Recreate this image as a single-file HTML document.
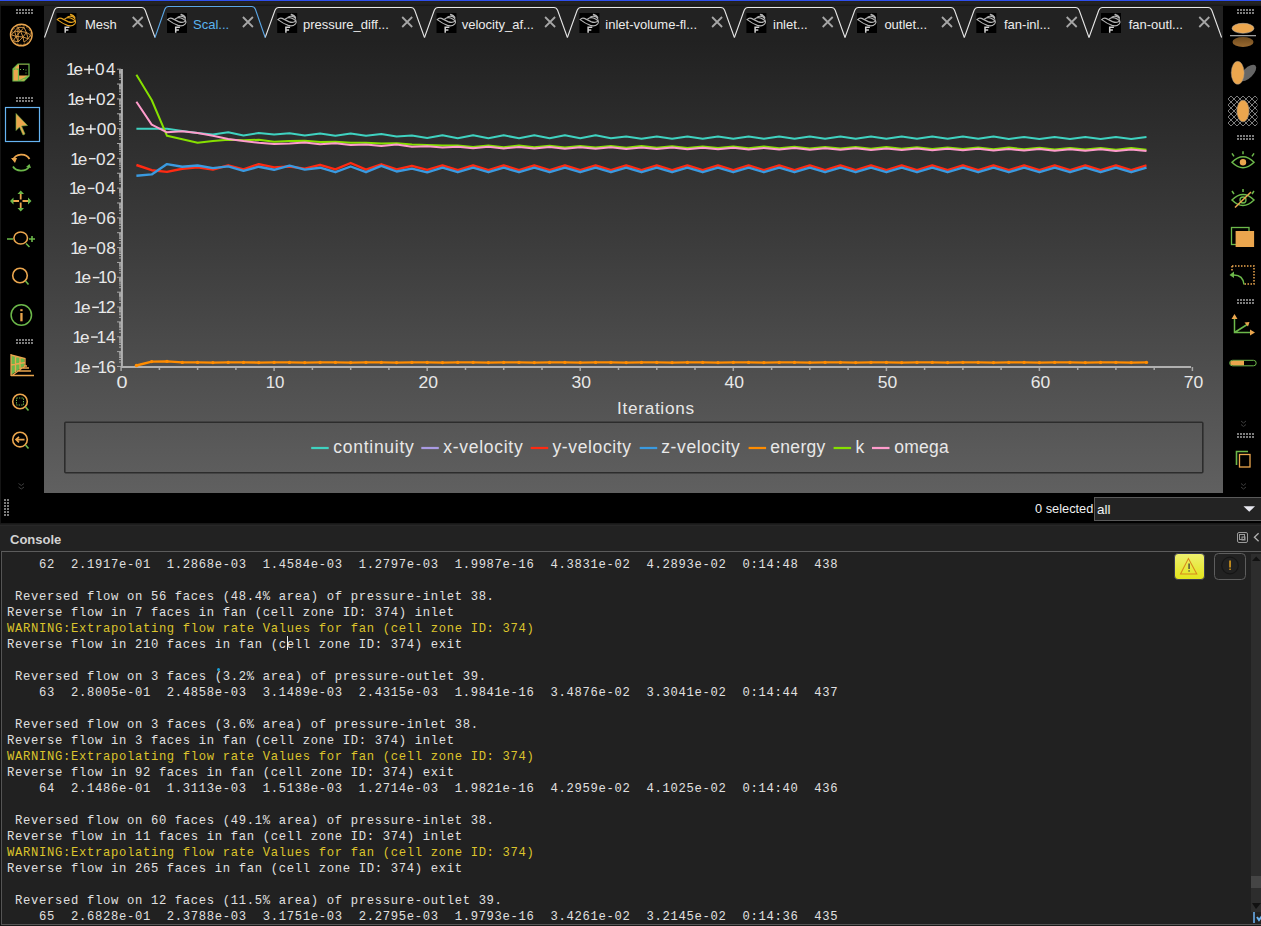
<!DOCTYPE html>
<html><head><meta charset="utf-8">
<style>
*{margin:0;padding:0;box-sizing:border-box}
html,body{width:1261px;height:926px;overflow:hidden;background:#1a1a1a;font-family:"Liberation Sans",sans-serif}
.abs{position:absolute}
#topline{left:0;top:0;width:1261px;height:1px;background:#2f50ee}
#topband{left:0;top:1px;width:1261px;height:5px;background:linear-gradient(#1f1d16 0,#242424 20%,#222 50%,#161616 100%)}
#ltb{left:1px;top:6px;width:43px;height:517px;background:#000}
#lcol{left:0;top:6px;width:1px;height:920px;background:#141414}
#rtb{left:1223px;top:6px;width:38px;height:487px;background:#000}
#tabbar{left:44px;top:6px;width:1179px;height:34px;background:#222}
#status{left:44px;top:493px;width:1217px;height:30px;background:#000}
#sel{left:1035px;top:501px;font-size:12.8px;color:#f0f0f0}
#dd{left:1094px;top:497px;width:167px;height:24px;background:#232323;border:1px solid #5a5a5a;border-right:none}
#ddtxt{left:1097px;top:501.5px;font-size:13.5px;color:#f2f2f2}
#contitle{left:0;top:523px;width:1261px;height:28px;background:#222;border-top:1px solid #181818;box-shadow:inset 0 1px 0 #1e1e1e, inset 0 2px 0 #282828}
#contitle .t{position:absolute;left:10px;top:530px;font-weight:bold;font-size:13px;color:#cfcfcf}
#conbox{left:1px;top:551px;width:1260px;height:374px;border-top:1px solid #5c5c5c;border-left:1px solid #555;border-bottom:1px solid #555;background:#212121}
#con{left:7px;top:557px;font-family:"Liberation Mono",monospace;font-size:12.2px;letter-spacing:0.68px;line-height:16px;color:#e0e0e0;white-space:pre}
#con .w{color:#dcc42c}
#scroll{left:1251px;top:554px;width:10px;height:358px;background:#2d2d2d}
</style></head><body>
<div class="abs" id="topline"></div>
<div class="abs" id="topband"></div>
<div class="abs" id="lcol"></div>
<div class="abs" id="ltb"></div>
<div class="abs" id="rtb"></div>
<div class="abs" id="tabbar"></div>
<svg width="1179" height="453" viewBox="44 40 1179 453" style="position:absolute;left:44px;top:40px">
<defs><linearGradient id="bg" x1="0" y1="0" x2="0" y2="1"><stop offset="0" stop-color="#212121"/><stop offset="0.45" stop-color="#3c3c3c"/><stop offset="1" stop-color="#606060"/></linearGradient></defs>
<rect x="44" y="40" width="1179" height="453" fill="url(#bg)"/>
<g stroke="#a8a8a8" stroke-width="1"><line x1="117.0" y1="366.50" x2="121" y2="366.50"/><line x1="119" y1="362.03" x2="121" y2="362.03"/><line x1="119" y1="359.41" x2="121" y2="359.41"/><line x1="119" y1="357.55" x2="121" y2="357.55"/><line x1="119" y1="356.11" x2="121" y2="356.11"/><line x1="119" y1="354.93" x2="121" y2="354.93"/><line x1="119" y1="353.94" x2="121" y2="353.94"/><line x1="119" y1="353.08" x2="121" y2="353.08"/><line x1="119" y1="352.32" x2="121" y2="352.32"/><line x1="117.0" y1="351.63" x2="121" y2="351.63"/><line x1="119" y1="347.16" x2="121" y2="347.16"/><line x1="119" y1="344.54" x2="121" y2="344.54"/><line x1="119" y1="342.69" x2="121" y2="342.69"/><line x1="119" y1="341.24" x2="121" y2="341.24"/><line x1="119" y1="340.07" x2="121" y2="340.07"/><line x1="119" y1="339.07" x2="121" y2="339.07"/><line x1="119" y1="338.21" x2="121" y2="338.21"/><line x1="119" y1="337.45" x2="121" y2="337.45"/><line x1="117.0" y1="336.77" x2="121" y2="336.77"/><line x1="119" y1="332.30" x2="121" y2="332.30"/><line x1="119" y1="329.68" x2="121" y2="329.68"/><line x1="119" y1="327.82" x2="121" y2="327.82"/><line x1="119" y1="326.38" x2="121" y2="326.38"/><line x1="119" y1="325.20" x2="121" y2="325.20"/><line x1="119" y1="324.21" x2="121" y2="324.21"/><line x1="119" y1="323.35" x2="121" y2="323.35"/><line x1="119" y1="322.59" x2="121" y2="322.59"/><line x1="117.0" y1="321.91" x2="121" y2="321.91"/><line x1="119" y1="317.43" x2="121" y2="317.43"/><line x1="119" y1="314.81" x2="121" y2="314.81"/><line x1="119" y1="312.96" x2="121" y2="312.96"/><line x1="119" y1="311.51" x2="121" y2="311.51"/><line x1="119" y1="310.34" x2="121" y2="310.34"/><line x1="119" y1="309.34" x2="121" y2="309.34"/><line x1="119" y1="308.48" x2="121" y2="308.48"/><line x1="119" y1="307.72" x2="121" y2="307.72"/><line x1="117.0" y1="307.04" x2="121" y2="307.04"/><line x1="119" y1="302.57" x2="121" y2="302.57"/><line x1="119" y1="299.95" x2="121" y2="299.95"/><line x1="119" y1="298.09" x2="121" y2="298.09"/><line x1="119" y1="296.65" x2="121" y2="296.65"/><line x1="119" y1="295.47" x2="121" y2="295.47"/><line x1="119" y1="294.48" x2="121" y2="294.48"/><line x1="119" y1="293.62" x2="121" y2="293.62"/><line x1="119" y1="292.86" x2="121" y2="292.86"/><line x1="117.0" y1="292.18" x2="121" y2="292.18"/><line x1="119" y1="287.70" x2="121" y2="287.70"/><line x1="119" y1="285.08" x2="121" y2="285.08"/><line x1="119" y1="283.23" x2="121" y2="283.23"/><line x1="119" y1="281.78" x2="121" y2="281.78"/><line x1="119" y1="280.61" x2="121" y2="280.61"/><line x1="119" y1="279.61" x2="121" y2="279.61"/><line x1="119" y1="278.75" x2="121" y2="278.75"/><line x1="119" y1="277.99" x2="121" y2="277.99"/><line x1="117.0" y1="277.31" x2="121" y2="277.31"/><line x1="119" y1="272.84" x2="121" y2="272.84"/><line x1="119" y1="270.22" x2="121" y2="270.22"/><line x1="119" y1="268.36" x2="121" y2="268.36"/><line x1="119" y1="266.92" x2="121" y2="266.92"/><line x1="119" y1="265.74" x2="121" y2="265.74"/><line x1="119" y1="264.75" x2="121" y2="264.75"/><line x1="119" y1="263.89" x2="121" y2="263.89"/><line x1="119" y1="263.13" x2="121" y2="263.13"/><line x1="117.0" y1="262.44" x2="121" y2="262.44"/><line x1="119" y1="257.97" x2="121" y2="257.97"/><line x1="119" y1="255.35" x2="121" y2="255.35"/><line x1="119" y1="253.50" x2="121" y2="253.50"/><line x1="119" y1="252.05" x2="121" y2="252.05"/><line x1="119" y1="250.88" x2="121" y2="250.88"/><line x1="119" y1="249.88" x2="121" y2="249.88"/><line x1="119" y1="249.02" x2="121" y2="249.02"/><line x1="119" y1="248.26" x2="121" y2="248.26"/><line x1="117.0" y1="247.58" x2="121" y2="247.58"/><line x1="119" y1="243.11" x2="121" y2="243.11"/><line x1="119" y1="240.49" x2="121" y2="240.49"/><line x1="119" y1="238.63" x2="121" y2="238.63"/><line x1="119" y1="237.19" x2="121" y2="237.19"/><line x1="119" y1="236.01" x2="121" y2="236.01"/><line x1="119" y1="235.02" x2="121" y2="235.02"/><line x1="119" y1="234.16" x2="121" y2="234.16"/><line x1="119" y1="233.40" x2="121" y2="233.40"/><line x1="117.0" y1="232.72" x2="121" y2="232.72"/><line x1="119" y1="228.24" x2="121" y2="228.24"/><line x1="119" y1="225.62" x2="121" y2="225.62"/><line x1="119" y1="223.77" x2="121" y2="223.77"/><line x1="119" y1="222.32" x2="121" y2="222.32"/><line x1="119" y1="221.15" x2="121" y2="221.15"/><line x1="119" y1="220.15" x2="121" y2="220.15"/><line x1="119" y1="219.29" x2="121" y2="219.29"/><line x1="119" y1="218.53" x2="121" y2="218.53"/><line x1="117.0" y1="217.85" x2="121" y2="217.85"/><line x1="119" y1="213.38" x2="121" y2="213.38"/><line x1="119" y1="210.76" x2="121" y2="210.76"/><line x1="119" y1="208.90" x2="121" y2="208.90"/><line x1="119" y1="207.46" x2="121" y2="207.46"/><line x1="119" y1="206.28" x2="121" y2="206.28"/><line x1="119" y1="205.29" x2="121" y2="205.29"/><line x1="119" y1="204.43" x2="121" y2="204.43"/><line x1="119" y1="203.67" x2="121" y2="203.67"/><line x1="117.0" y1="202.99" x2="121" y2="202.99"/><line x1="119" y1="198.51" x2="121" y2="198.51"/><line x1="119" y1="195.89" x2="121" y2="195.89"/><line x1="119" y1="194.04" x2="121" y2="194.04"/><line x1="119" y1="192.59" x2="121" y2="192.59"/><line x1="119" y1="191.42" x2="121" y2="191.42"/><line x1="119" y1="190.42" x2="121" y2="190.42"/><line x1="119" y1="189.56" x2="121" y2="189.56"/><line x1="119" y1="188.80" x2="121" y2="188.80"/><line x1="117.0" y1="188.12" x2="121" y2="188.12"/><line x1="119" y1="183.65" x2="121" y2="183.65"/><line x1="119" y1="181.03" x2="121" y2="181.03"/><line x1="119" y1="179.17" x2="121" y2="179.17"/><line x1="119" y1="177.73" x2="121" y2="177.73"/><line x1="119" y1="176.55" x2="121" y2="176.55"/><line x1="119" y1="175.56" x2="121" y2="175.56"/><line x1="119" y1="174.70" x2="121" y2="174.70"/><line x1="119" y1="173.94" x2="121" y2="173.94"/><line x1="117.0" y1="173.25" x2="121" y2="173.25"/><line x1="119" y1="168.78" x2="121" y2="168.78"/><line x1="119" y1="166.16" x2="121" y2="166.16"/><line x1="119" y1="164.31" x2="121" y2="164.31"/><line x1="119" y1="162.86" x2="121" y2="162.86"/><line x1="119" y1="161.69" x2="121" y2="161.69"/><line x1="119" y1="160.69" x2="121" y2="160.69"/><line x1="119" y1="159.83" x2="121" y2="159.83"/><line x1="119" y1="159.07" x2="121" y2="159.07"/><line x1="117.0" y1="158.39" x2="121" y2="158.39"/><line x1="119" y1="153.92" x2="121" y2="153.92"/><line x1="119" y1="151.30" x2="121" y2="151.30"/><line x1="119" y1="149.44" x2="121" y2="149.44"/><line x1="119" y1="148.00" x2="121" y2="148.00"/><line x1="119" y1="146.82" x2="121" y2="146.82"/><line x1="119" y1="145.83" x2="121" y2="145.83"/><line x1="119" y1="144.97" x2="121" y2="144.97"/><line x1="119" y1="144.21" x2="121" y2="144.21"/><line x1="117.0" y1="143.53" x2="121" y2="143.53"/><line x1="119" y1="139.05" x2="121" y2="139.05"/><line x1="119" y1="136.43" x2="121" y2="136.43"/><line x1="119" y1="134.58" x2="121" y2="134.58"/><line x1="119" y1="133.13" x2="121" y2="133.13"/><line x1="119" y1="131.96" x2="121" y2="131.96"/><line x1="119" y1="130.96" x2="121" y2="130.96"/><line x1="119" y1="130.10" x2="121" y2="130.10"/><line x1="119" y1="129.34" x2="121" y2="129.34"/><line x1="117.0" y1="128.66" x2="121" y2="128.66"/><line x1="119" y1="124.19" x2="121" y2="124.19"/><line x1="119" y1="121.57" x2="121" y2="121.57"/><line x1="119" y1="119.71" x2="121" y2="119.71"/><line x1="119" y1="118.27" x2="121" y2="118.27"/><line x1="119" y1="117.09" x2="121" y2="117.09"/><line x1="119" y1="116.10" x2="121" y2="116.10"/><line x1="119" y1="115.24" x2="121" y2="115.24"/><line x1="119" y1="114.48" x2="121" y2="114.48"/><line x1="117.0" y1="113.80" x2="121" y2="113.80"/><line x1="119" y1="109.32" x2="121" y2="109.32"/><line x1="119" y1="106.70" x2="121" y2="106.70"/><line x1="119" y1="104.85" x2="121" y2="104.85"/><line x1="119" y1="103.40" x2="121" y2="103.40"/><line x1="119" y1="102.23" x2="121" y2="102.23"/><line x1="119" y1="101.23" x2="121" y2="101.23"/><line x1="119" y1="100.37" x2="121" y2="100.37"/><line x1="119" y1="99.61" x2="121" y2="99.61"/><line x1="117.0" y1="98.93" x2="121" y2="98.93"/><line x1="119" y1="94.46" x2="121" y2="94.46"/><line x1="119" y1="91.84" x2="121" y2="91.84"/><line x1="119" y1="89.98" x2="121" y2="89.98"/><line x1="119" y1="88.54" x2="121" y2="88.54"/><line x1="119" y1="87.36" x2="121" y2="87.36"/><line x1="119" y1="86.37" x2="121" y2="86.37"/><line x1="119" y1="85.51" x2="121" y2="85.51"/><line x1="119" y1="84.75" x2="121" y2="84.75"/><line x1="117.0" y1="84.06" x2="121" y2="84.06"/><line x1="119" y1="79.59" x2="121" y2="79.59"/><line x1="119" y1="76.97" x2="121" y2="76.97"/><line x1="119" y1="75.12" x2="121" y2="75.12"/><line x1="119" y1="73.67" x2="121" y2="73.67"/><line x1="119" y1="72.50" x2="121" y2="72.50"/><line x1="119" y1="71.50" x2="121" y2="71.50"/><line x1="119" y1="70.64" x2="121" y2="70.64"/><line x1="119" y1="69.88" x2="121" y2="69.88"/><line x1="117.0" y1="69.20" x2="121" y2="69.20"/></g>
<g stroke="#a8a8a8" stroke-width="1.5"><line x1="121.1" y1="367" x2="121.1" y2="371"/><line x1="159.4" y1="367" x2="159.4" y2="370"/><line x1="197.6" y1="367" x2="197.6" y2="370"/><line x1="235.9" y1="367" x2="235.9" y2="370"/><line x1="274.1" y1="367" x2="274.1" y2="371"/><line x1="312.4" y1="367" x2="312.4" y2="370"/><line x1="350.7" y1="367" x2="350.7" y2="370"/><line x1="388.9" y1="367" x2="388.9" y2="370"/><line x1="427.2" y1="367" x2="427.2" y2="371"/><line x1="465.5" y1="367" x2="465.5" y2="370"/><line x1="503.7" y1="367" x2="503.7" y2="370"/><line x1="542.0" y1="367" x2="542.0" y2="370"/><line x1="580.2" y1="367" x2="580.2" y2="371"/><line x1="618.5" y1="367" x2="618.5" y2="370"/><line x1="656.8" y1="367" x2="656.8" y2="370"/><line x1="695.0" y1="367" x2="695.0" y2="370"/><line x1="733.3" y1="367" x2="733.3" y2="371"/><line x1="771.6" y1="367" x2="771.6" y2="370"/><line x1="809.8" y1="367" x2="809.8" y2="370"/><line x1="848.1" y1="367" x2="848.1" y2="370"/><line x1="886.4" y1="367" x2="886.4" y2="371"/><line x1="924.6" y1="367" x2="924.6" y2="370"/><line x1="962.9" y1="367" x2="962.9" y2="370"/><line x1="1001.1" y1="367" x2="1001.1" y2="370"/><line x1="1039.4" y1="367" x2="1039.4" y2="371"/><line x1="1077.7" y1="367" x2="1077.7" y2="370"/><line x1="1115.9" y1="367" x2="1115.9" y2="370"/><line x1="1154.2" y1="367" x2="1154.2" y2="370"/><line x1="1192.4" y1="367" x2="1192.4" y2="371"/></g>
<line x1="121.9" y1="69" x2="121.9" y2="368" stroke="#b0b0b0" stroke-width="2"/>
<line x1="121" y1="367" x2="1191" y2="367" stroke="#b0b0b0" stroke-width="2"/>
<g stroke="#e8e8e8" stroke-width="1.45" fill="none"><path d="M84.1,69.50 H94.1 M89.10,64.9 V74.1"/><path d="M85.2,99.23 H95.2 M90.20,94.6 V103.8"/><path d="M85.8,128.96 H95.8 M90.80,124.4 V133.6"/><path d="M88.9,158.69 H95.6"/><path d="M87.8,188.42 H94.5"/><path d="M89.0,218.15 H95.7"/><path d="M89.0,247.88 H95.7"/><path d="M92.8,277.61 H99.5"/><path d="M92.2,307.34 H98.9"/><path d="M91.1,337.07 H97.8"/><path d="M92.3,366.80 H99.0"/></g>
<g fill="#e8e8e8" font-family="Liberation Sans, sans-serif" font-size="17.2"><text x="66.1 73.6 95.0 106.0" y="75.3">1e04</text><text x="67.2 74.7 96.1 106.1" y="105.0">1e02</text><text x="67.8 75.3 96.7 106.7" y="134.8">1e00</text><text x="70.2 77.7 96.1 106.1" y="164.5">1e02</text><text x="69.1 76.6 95.0 106.0" y="194.2">1e04</text><text x="70.3 77.8 96.2 106.2" y="224.0">1e06</text><text x="70.3 77.8 96.2 106.2" y="253.7">1e08</text><text x="74.1 81.6 98.1 106.7" y="283.4">1e10</text><text x="73.5 81.0 97.5 106.1" y="313.1">1e12</text><text x="72.4 79.9 96.4 106.0" y="342.9">1e14</text><text x="73.6 81.1 97.6 106.2" y="372.6">1e16</text><text x="122.1" y="388" text-anchor="middle" textLength="11.0" lengthAdjust="spacingAndGlyphs">0</text><text x="275.1" y="388" text-anchor="middle" textLength="18.8" lengthAdjust="spacingAndGlyphs">10</text><text x="428.2" y="388" text-anchor="middle" textLength="19.5" lengthAdjust="spacingAndGlyphs">20</text><text x="581.2" y="388" text-anchor="middle" textLength="19.5" lengthAdjust="spacingAndGlyphs">30</text><text x="734.3" y="388" text-anchor="middle" textLength="19.5" lengthAdjust="spacingAndGlyphs">40</text><text x="887.4" y="388" text-anchor="middle" textLength="19.5" lengthAdjust="spacingAndGlyphs">50</text><text x="1040.4" y="388" text-anchor="middle" textLength="19.5" lengthAdjust="spacingAndGlyphs">60</text><text x="1193.4" y="388" text-anchor="middle" textLength="19.5" lengthAdjust="spacingAndGlyphs">70</text><text x="617" y="414" textLength="77" lengthAdjust="spacing">Iterations</text></g>
<polyline fill="none" stroke="#ff8c00" stroke-width="2.4" stroke-linejoin="round" points="136.4,365.5 151.7,361.6 167.0,361.4 182.3,362.4 197.6,362.4 212.9,362.6 228.2,362.4 243.5,362.4 258.8,362.6 274.1,362.4 289.5,362.4 304.8,362.6 320.1,362.4 335.4,362.4 350.7,362.6 366.0,362.4 381.3,362.4 396.6,362.6 411.9,362.4 427.2,362.4 442.5,362.6 457.8,362.4 473.1,362.4 488.4,362.6 503.7,362.4 519.0,362.4 534.3,362.6 549.6,362.4 564.9,362.4 580.2,362.6 595.6,362.4 610.9,362.4 626.2,362.6 641.5,362.4 656.8,362.4 672.1,362.6 687.4,362.4 702.7,362.4 718.0,362.6 733.3,362.4 748.6,362.4 763.9,362.6 779.2,362.4 794.5,362.4 809.8,362.6 825.1,362.4 840.4,362.4 855.7,362.6 871.0,362.4 886.4,362.4 901.7,362.6 917.0,362.4 932.3,362.4 947.6,362.6 962.9,362.4 978.2,362.4 993.5,362.6 1008.8,362.4 1024.1,362.4 1039.4,362.6 1054.7,362.4 1070.0,362.4 1085.3,362.6 1100.6,362.4 1115.9,362.4 1131.2,362.6 1146.5,362.4"/>
<g fill="#ff8c00"><circle cx="136.4" cy="365.5" r="1.7"/><circle cx="151.7" cy="361.6" r="1.7"/><circle cx="167.0" cy="361.4" r="1.7"/><circle cx="182.3" cy="362.4" r="1.7"/><circle cx="197.6" cy="362.4" r="1.7"/><circle cx="212.9" cy="362.6" r="1.7"/><circle cx="228.2" cy="362.4" r="1.7"/><circle cx="243.5" cy="362.4" r="1.7"/><circle cx="258.8" cy="362.6" r="1.7"/><circle cx="274.1" cy="362.4" r="1.7"/><circle cx="289.5" cy="362.4" r="1.7"/><circle cx="304.8" cy="362.6" r="1.7"/><circle cx="320.1" cy="362.4" r="1.7"/><circle cx="335.4" cy="362.4" r="1.7"/><circle cx="350.7" cy="362.6" r="1.7"/><circle cx="366.0" cy="362.4" r="1.7"/><circle cx="381.3" cy="362.4" r="1.7"/><circle cx="396.6" cy="362.6" r="1.7"/><circle cx="411.9" cy="362.4" r="1.7"/><circle cx="427.2" cy="362.4" r="1.7"/><circle cx="442.5" cy="362.6" r="1.7"/><circle cx="457.8" cy="362.4" r="1.7"/><circle cx="473.1" cy="362.4" r="1.7"/><circle cx="488.4" cy="362.6" r="1.7"/><circle cx="503.7" cy="362.4" r="1.7"/><circle cx="519.0" cy="362.4" r="1.7"/><circle cx="534.3" cy="362.6" r="1.7"/><circle cx="549.6" cy="362.4" r="1.7"/><circle cx="564.9" cy="362.4" r="1.7"/><circle cx="580.2" cy="362.6" r="1.7"/><circle cx="595.6" cy="362.4" r="1.7"/><circle cx="610.9" cy="362.4" r="1.7"/><circle cx="626.2" cy="362.6" r="1.7"/><circle cx="641.5" cy="362.4" r="1.7"/><circle cx="656.8" cy="362.4" r="1.7"/><circle cx="672.1" cy="362.6" r="1.7"/><circle cx="687.4" cy="362.4" r="1.7"/><circle cx="702.7" cy="362.4" r="1.7"/><circle cx="718.0" cy="362.6" r="1.7"/><circle cx="733.3" cy="362.4" r="1.7"/><circle cx="748.6" cy="362.4" r="1.7"/><circle cx="763.9" cy="362.6" r="1.7"/><circle cx="779.2" cy="362.4" r="1.7"/><circle cx="794.5" cy="362.4" r="1.7"/><circle cx="809.8" cy="362.6" r="1.7"/><circle cx="825.1" cy="362.4" r="1.7"/><circle cx="840.4" cy="362.4" r="1.7"/><circle cx="855.7" cy="362.6" r="1.7"/><circle cx="871.0" cy="362.4" r="1.7"/><circle cx="886.4" cy="362.4" r="1.7"/><circle cx="901.7" cy="362.6" r="1.7"/><circle cx="917.0" cy="362.4" r="1.7"/><circle cx="932.3" cy="362.4" r="1.7"/><circle cx="947.6" cy="362.6" r="1.7"/><circle cx="962.9" cy="362.4" r="1.7"/><circle cx="978.2" cy="362.4" r="1.7"/><circle cx="993.5" cy="362.6" r="1.7"/><circle cx="1008.8" cy="362.4" r="1.7"/><circle cx="1024.1" cy="362.4" r="1.7"/><circle cx="1039.4" cy="362.6" r="1.7"/><circle cx="1054.7" cy="362.4" r="1.7"/><circle cx="1070.0" cy="362.4" r="1.7"/><circle cx="1085.3" cy="362.6" r="1.7"/><circle cx="1100.6" cy="362.4" r="1.7"/><circle cx="1115.9" cy="362.4" r="1.7"/><circle cx="1131.2" cy="362.6" r="1.7"/><circle cx="1146.5" cy="362.4" r="1.7"/></g>
<polyline fill="none" stroke="#3fd2c0" stroke-width="2" stroke-linejoin="round" points="136.4,128.8 151.7,128.8 167.0,128.8 182.3,130.9 197.6,133.0 212.9,134.4 228.2,132.3 243.5,135.5 258.8,133.0 274.1,134.4 289.5,133.2 304.8,135.4 320.1,133.5 335.4,135.8 350.7,133.5 366.0,135.8 381.3,134.1 396.6,136.4 411.9,135.4 427.2,137.9 442.5,135.3 457.8,138.3 473.1,135.3 488.4,138.3 503.7,135.3 519.0,138.3 534.3,135.3 549.6,138.3 564.9,135.3 580.2,138.3 595.6,135.3 610.9,138.3 626.2,136.5 641.5,138.8 656.8,136.5 672.1,138.8 687.4,136.5 702.7,138.8 718.0,136.5 733.3,138.8 748.6,136.5 763.9,138.8 779.2,136.5 794.5,138.8 809.8,136.5 825.1,138.8 840.4,136.4 855.7,138.8 871.0,136.4 886.4,138.8 901.7,136.4 917.0,138.8 932.3,136.4 947.6,138.8 962.9,136.4 978.2,138.8 993.5,136.4 1008.8,138.9 1024.1,137.0 1039.4,138.9 1054.7,137.0 1070.0,138.9 1085.3,137.0 1100.6,138.9 1115.9,137.0 1131.2,138.9 1146.5,137.0"/>
<polyline fill="none" stroke="#86e000" stroke-width="2" stroke-linejoin="round" points="136.4,74.7 151.7,100.0 167.0,135.8 182.3,139.3 197.6,142.8 212.9,141.1 228.2,139.7 243.5,140.3 258.8,139.7 274.1,141.7 289.5,141.1 304.8,140.8 320.1,142.0 335.4,141.7 350.7,142.7 366.0,142.7 381.3,143.6 396.6,143.2 411.9,144.5 427.2,144.9 442.5,145.5 457.8,145.4 473.1,147.0 488.4,145.5 503.7,147.2 519.0,145.6 534.3,147.3 549.6,145.7 564.9,147.4 580.2,145.9 595.6,147.5 610.9,146.0 626.2,147.7 641.5,146.1 656.8,147.8 672.1,146.2 687.4,147.9 702.7,146.4 718.0,148.0 733.3,146.5 748.6,148.2 763.9,146.6 779.2,148.3 794.5,146.8 809.8,148.4 825.1,146.9 840.4,148.5 855.7,147.0 871.0,148.7 886.4,147.1 901.7,148.8 917.0,147.3 932.3,148.9 947.6,147.4 962.9,149.0 978.2,147.5 993.5,149.2 1008.8,147.6 1024.1,149.3 1039.4,147.8 1054.7,149.4 1070.0,147.9 1085.3,149.5 1100.6,148.0 1115.9,149.7 1131.2,148.1 1146.5,149.8"/>
<polyline fill="none" stroke="#ff9ccc" stroke-width="2" stroke-linejoin="round" points="136.4,101.7 151.7,124.6 167.0,132.3 182.3,131.3 197.6,133.0 212.9,135.8 228.2,138.9 243.5,141.1 258.8,142.8 274.1,143.9 289.5,143.6 304.8,142.4 320.1,144.3 335.4,143.2 350.7,144.9 366.0,144.5 381.3,145.9 396.6,144.5 411.9,146.8 427.2,146.2 442.5,147.4 457.8,146.7 473.1,148.3 488.4,146.8 503.7,148.5 519.0,146.9 534.3,148.6 549.6,147.0 564.9,148.7 580.2,147.2 595.6,148.8 610.9,147.3 626.2,149.0 641.5,147.4 656.8,149.1 672.1,147.5 687.4,149.2 702.7,147.7 718.0,149.3 733.3,147.8 748.6,149.5 763.9,147.9 779.2,149.6 794.5,148.1 809.8,149.7 825.1,148.2 840.4,149.8 855.7,148.3 871.0,150.0 886.4,148.4 901.7,150.1 917.0,148.6 932.3,150.2 947.6,148.7 962.9,150.3 978.2,148.8 993.5,150.5 1008.8,148.9 1024.1,150.6 1039.4,149.1 1054.7,150.7 1070.0,149.2 1085.3,150.8 1100.6,149.3 1115.9,151.0 1131.2,149.4 1146.5,151.1"/>
<polyline fill="none" stroke="#ff2a12" stroke-width="2.4" stroke-linejoin="round" points="136.4,165.0 151.7,170.2 167.0,171.9 182.3,168.8 197.6,167.4 212.9,169.5 228.2,165.3 243.5,169.5 258.8,164.1 274.1,167.4 289.5,166.5 304.8,168.6 320.1,164.8 335.4,169.3 350.7,163.0 366.0,169.6 381.3,164.3 396.6,169.4 411.9,165.8 427.2,169.9 442.5,165.4 457.8,170.2 473.1,165.4 488.4,170.2 503.7,165.4 519.0,170.2 534.3,165.4 549.6,170.2 564.9,165.4 580.2,170.2 595.6,165.4 610.9,170.2 626.2,165.4 641.5,170.2 656.8,165.4 672.1,170.2 687.4,165.4 702.7,170.2 718.0,165.4 733.3,170.2 748.6,165.4 763.9,170.2 779.2,165.4 794.5,170.2 809.8,165.4 825.1,170.2 840.4,165.4 855.7,170.2 871.0,165.4 886.4,170.2 901.7,165.4 917.0,170.2 932.3,165.4 947.6,170.2 962.9,165.4 978.2,170.2 993.5,165.4 1008.8,170.2 1024.1,165.4 1039.4,170.2 1054.7,165.4 1070.0,170.2 1085.3,165.4 1100.6,170.2 1115.9,165.4 1131.2,170.2 1146.5,165.4"/>
<polyline fill="none" stroke="#3a9ae0" stroke-width="2.4" stroke-linejoin="round" points="136.4,175.8 151.7,174.4 167.0,164.1 182.3,166.7 197.6,165.5 212.9,168.1 228.2,166.4 243.5,170.9 258.8,166.7 274.1,169.8 289.5,165.6 304.8,169.6 320.1,167.7 335.4,172.2 350.7,166.5 366.0,172.2 381.3,165.8 396.6,171.5 411.9,168.6 427.2,172.4 442.5,167.6 457.8,172.2 473.1,167.6 488.4,172.2 503.7,167.6 519.0,172.2 534.3,167.6 549.6,172.2 564.9,167.6 580.2,172.2 595.6,167.6 610.9,172.2 626.2,167.6 641.5,172.2 656.8,167.6 672.1,172.2 687.4,167.6 702.7,172.2 718.0,167.6 733.3,172.2 748.6,167.6 763.9,172.2 779.2,167.6 794.5,172.2 809.8,167.6 825.1,172.2 840.4,167.6 855.7,172.2 871.0,167.6 886.4,172.2 901.7,167.6 917.0,172.2 932.3,167.6 947.6,172.2 962.9,167.6 978.2,172.2 993.5,167.6 1008.8,172.2 1024.1,167.6 1039.4,172.2 1054.7,167.6 1070.0,172.2 1085.3,167.6 1100.6,172.2 1115.9,167.6 1131.2,172.2 1146.5,167.6"/>
<rect x="64.8" y="422.2" width="1138" height="50.6" rx="1" fill="none" stroke="#2c2c2c" stroke-width="1.6"/>
<g fill="#e8e8e8" font-family="Liberation Sans, sans-serif" font-size="17.5"><line x1="311.2" y1="448" x2="328.7" y2="448" stroke="#3fd2c0" stroke-width="2.2"/><text x="333.3" y="453" textLength="80.5" lengthAdjust="spacing">continuity</text><line x1="421.3" y1="448" x2="438.8" y2="448" stroke="#a99be3" stroke-width="2.2"/><text x="443.2" y="453" textLength="79.5" lengthAdjust="spacing">x-velocity</text><line x1="530.7" y1="448" x2="548.2" y2="448" stroke="#ff2a12" stroke-width="2.2"/><text x="552.5" y="453" textLength="78.5" lengthAdjust="spacing">y-velocity</text><line x1="639.7" y1="448" x2="657.2" y2="448" stroke="#3a9ae0" stroke-width="2.2"/><text x="661.2" y="453" textLength="78.5" lengthAdjust="spacing">z-velocity</text><line x1="748.6" y1="448" x2="766.1" y2="448" stroke="#ff8c00" stroke-width="2.2"/><text x="770.3" y="453" textLength="55.0" lengthAdjust="spacing">energy</text><line x1="833.6" y1="448" x2="851.1" y2="448" stroke="#86e000" stroke-width="2.2"/><text x="855.4" y="453" textLength="8.0" lengthAdjust="spacing">k</text><line x1="872.0" y1="448" x2="889.5" y2="448" stroke="#ff9ccc" stroke-width="2.2"/><text x="894.2" y="453" textLength="54.5" lengthAdjust="spacing">omega</text></g>
</svg>
<svg class="abs" style="left:0;top:0" width="1261" height="45">
<path d="M44.5,37.5 L54.3,10.3 Q55.5,7.5 58.0,7.5 L141.5,7.5 Q144.0,7.5 145.2,10.3 L155.0,37.5" fill="none" stroke="#e6e6e6" stroke-width="1.1"/>
<path d="M265.2,37.5 L275.0,10.3 Q276.2,7.5 278.7,7.5 L411.0,7.5 Q413.5,7.5 414.7,10.3 L424.5,37.5" fill="none" stroke="#e6e6e6" stroke-width="1.1"/>
<path d="M424.5,37.5 L434.3,10.3 Q435.5,7.5 438.0,7.5 L553.9,7.5 Q556.4,7.5 557.6,10.3 L567.4,37.5" fill="none" stroke="#e6e6e6" stroke-width="1.1"/>
<path d="M567.4,37.5 L577.2,10.3 Q578.4,7.5 580.9,7.5 L720.9,7.5 Q723.4,7.5 724.6,10.3 L734.4,37.5" fill="none" stroke="#e6e6e6" stroke-width="1.1"/>
<path d="M734.4,37.5 L744.2,10.3 Q745.4,7.5 747.9,7.5 L831.5,7.5 Q834.0,7.5 835.2,10.3 L845.0,37.5" fill="none" stroke="#e6e6e6" stroke-width="1.1"/>
<path d="M845.0,37.5 L854.8,10.3 Q856.0,7.5 858.5,7.5 L950.8,7.5 Q953.3,7.5 954.5,10.3 L964.3,37.5" fill="none" stroke="#e6e6e6" stroke-width="1.1"/>
<path d="M964.3,37.5 L974.1,10.3 Q975.3,7.5 977.8,7.5 L1075.5,7.5 Q1078.0,7.5 1079.2,10.3 L1089.0,37.5" fill="none" stroke="#e6e6e6" stroke-width="1.1"/>
<path d="M1089.0,37.5 L1098.8,10.3 Q1100.0,7.5 1102.5,7.5 L1208.1,7.5 Q1210.6,7.5 1211.8,10.3 L1221.6,37.5" fill="none" stroke="#e6e6e6" stroke-width="1.1"/>
<path d="M155.0,37.5 L164.8,9.3 Q166.0,6.5 168.5,6.5 L251.7,6.5 Q254.2,6.5 255.4,9.3 L265.2,37.5" fill="none" stroke="#5aa6e6" stroke-width="1.1"/>
<rect x="56.5" y="13.0" width="20" height="20" fill="#000"/><g transform="translate(56.5,13.0)" fill="none" stroke="#e0a020" stroke-width="1.15" stroke-linecap="round"><path d="M0.8,6.6 Q2.5,4.4 5,5.4 L11.5,8.6 Q16,10.4 18.4,8.2"/><path d="M0.8,6.6 Q6,10.6 11,12.4 Q15.5,13.8 18.3,10.8 Q19.6,9.2 18.6,7.6"/><path d="M8.3,6 Q10.5,3.8 14,5 Q17,6.2 18.6,7.8"/><path d="M10.8,4.3 Q13,2.6 15.8,3.6 Q18,4.6 18.6,6.2"/><path d="M14.2,1.6 Q17,2.2 18.2,4.4" stroke-width="1.6"/></g><path d="M65.2,32.8 v-5.6 h4.2 M65.2,30.0 h3.2" fill="none" stroke="#d0d0d0" stroke-width="1.5"/>
<text x="85.0" y="29" font-family="Liberation Sans, sans-serif" font-size="13" fill="#ececec">Mesh</text>
<path d="M132.7,17.0 l10,10 m0,-10 l-10,10" stroke="#a6a6a6" stroke-width="1.8" fill="none"/>
<rect x="167.0" y="13.0" width="20" height="20" fill="#000"/><g transform="translate(167.0,13.0)" fill="none" stroke="#b4b4b4" stroke-width="1.15" stroke-linecap="round"><path d="M0.8,6.6 Q2.5,4.4 5,5.4 L11.5,8.6 Q16,10.4 18.4,8.2"/><path d="M0.8,6.6 Q6,10.6 11,12.4 Q15.5,13.8 18.3,10.8 Q19.6,9.2 18.6,7.6"/><path d="M8.3,6 Q10.5,3.8 14,5 Q17,6.2 18.6,7.8"/><path d="M10.8,4.3 Q13,2.6 15.8,3.6 Q18,4.6 18.6,6.2"/><path d="M14.2,1.6 Q17,2.2 18.2,4.4" stroke-width="1.6"/></g><path d="M175.7,32.8 v-5.6 h4.2 M175.7,30.0 h3.2" fill="none" stroke="#d0d0d0" stroke-width="1.5"/>
<text x="193.0" y="29" font-family="Liberation Sans, sans-serif" font-size="13" fill="#5ab4f0">Scal...</text>
<path d="M242.9,17.0 l10,10 m0,-10 l-10,10" stroke="#a6a6a6" stroke-width="1.8" fill="none"/>
<rect x="277.2" y="13.0" width="20" height="20" fill="#000"/><g transform="translate(277.2,13.0)" fill="none" stroke="#b4b4b4" stroke-width="1.15" stroke-linecap="round"><path d="M0.8,6.6 Q2.5,4.4 5,5.4 L11.5,8.6 Q16,10.4 18.4,8.2"/><path d="M0.8,6.6 Q6,10.6 11,12.4 Q15.5,13.8 18.3,10.8 Q19.6,9.2 18.6,7.6"/><path d="M8.3,6 Q10.5,3.8 14,5 Q17,6.2 18.6,7.8"/><path d="M10.8,4.3 Q13,2.6 15.8,3.6 Q18,4.6 18.6,6.2"/><path d="M14.2,1.6 Q17,2.2 18.2,4.4" stroke-width="1.6"/></g><path d="M285.9,32.8 v-5.6 h4.2 M285.9,30.0 h3.2" fill="none" stroke="#d0d0d0" stroke-width="1.5"/>
<text x="303.0" y="29" font-family="Liberation Sans, sans-serif" font-size="13" fill="#ececec">pressure_diff...</text>
<path d="M402.2,17.0 l10,10 m0,-10 l-10,10" stroke="#a6a6a6" stroke-width="1.8" fill="none"/>
<rect x="436.5" y="13.0" width="20" height="20" fill="#000"/><g transform="translate(436.5,13.0)" fill="none" stroke="#b4b4b4" stroke-width="1.15" stroke-linecap="round"><path d="M0.8,6.6 Q2.5,4.4 5,5.4 L11.5,8.6 Q16,10.4 18.4,8.2"/><path d="M0.8,6.6 Q6,10.6 11,12.4 Q15.5,13.8 18.3,10.8 Q19.6,9.2 18.6,7.6"/><path d="M8.3,6 Q10.5,3.8 14,5 Q17,6.2 18.6,7.8"/><path d="M10.8,4.3 Q13,2.6 15.8,3.6 Q18,4.6 18.6,6.2"/><path d="M14.2,1.6 Q17,2.2 18.2,4.4" stroke-width="1.6"/></g><path d="M445.2,32.8 v-5.6 h4.2 M445.2,30.0 h3.2" fill="none" stroke="#d0d0d0" stroke-width="1.5"/>
<text x="461.7" y="29" font-family="Liberation Sans, sans-serif" font-size="13" fill="#ececec">velocity_af...</text>
<path d="M545.1,17.0 l10,10 m0,-10 l-10,10" stroke="#a6a6a6" stroke-width="1.8" fill="none"/>
<rect x="579.4" y="13.0" width="20" height="20" fill="#000"/><g transform="translate(579.4,13.0)" fill="none" stroke="#b4b4b4" stroke-width="1.15" stroke-linecap="round"><path d="M0.8,6.6 Q2.5,4.4 5,5.4 L11.5,8.6 Q16,10.4 18.4,8.2"/><path d="M0.8,6.6 Q6,10.6 11,12.4 Q15.5,13.8 18.3,10.8 Q19.6,9.2 18.6,7.6"/><path d="M8.3,6 Q10.5,3.8 14,5 Q17,6.2 18.6,7.8"/><path d="M10.8,4.3 Q13,2.6 15.8,3.6 Q18,4.6 18.6,6.2"/><path d="M14.2,1.6 Q17,2.2 18.2,4.4" stroke-width="1.6"/></g><path d="M588.1,32.8 v-5.6 h4.2 M588.1,30.0 h3.2" fill="none" stroke="#d0d0d0" stroke-width="1.5"/>
<text x="605.3" y="29" font-family="Liberation Sans, sans-serif" font-size="13" fill="#ececec">inlet-volume-fl...</text>
<path d="M712.1,17.0 l10,10 m0,-10 l-10,10" stroke="#a6a6a6" stroke-width="1.8" fill="none"/>
<rect x="746.4" y="13.0" width="20" height="20" fill="#000"/><g transform="translate(746.4,13.0)" fill="none" stroke="#b4b4b4" stroke-width="1.15" stroke-linecap="round"><path d="M0.8,6.6 Q2.5,4.4 5,5.4 L11.5,8.6 Q16,10.4 18.4,8.2"/><path d="M0.8,6.6 Q6,10.6 11,12.4 Q15.5,13.8 18.3,10.8 Q19.6,9.2 18.6,7.6"/><path d="M8.3,6 Q10.5,3.8 14,5 Q17,6.2 18.6,7.8"/><path d="M10.8,4.3 Q13,2.6 15.8,3.6 Q18,4.6 18.6,6.2"/><path d="M14.2,1.6 Q17,2.2 18.2,4.4" stroke-width="1.6"/></g><path d="M755.1,32.8 v-5.6 h4.2 M755.1,30.0 h3.2" fill="none" stroke="#d0d0d0" stroke-width="1.5"/>
<text x="773.0" y="29" font-family="Liberation Sans, sans-serif" font-size="13" fill="#ececec">inlet...</text>
<path d="M822.7,17.0 l10,10 m0,-10 l-10,10" stroke="#a6a6a6" stroke-width="1.8" fill="none"/>
<rect x="857.0" y="13.0" width="20" height="20" fill="#000"/><g transform="translate(857.0,13.0)" fill="none" stroke="#b4b4b4" stroke-width="1.15" stroke-linecap="round"><path d="M0.8,6.6 Q2.5,4.4 5,5.4 L11.5,8.6 Q16,10.4 18.4,8.2"/><path d="M0.8,6.6 Q6,10.6 11,12.4 Q15.5,13.8 18.3,10.8 Q19.6,9.2 18.6,7.6"/><path d="M8.3,6 Q10.5,3.8 14,5 Q17,6.2 18.6,7.8"/><path d="M10.8,4.3 Q13,2.6 15.8,3.6 Q18,4.6 18.6,6.2"/><path d="M14.2,1.6 Q17,2.2 18.2,4.4" stroke-width="1.6"/></g><path d="M865.7,32.8 v-5.6 h4.2 M865.7,30.0 h3.2" fill="none" stroke="#d0d0d0" stroke-width="1.5"/>
<text x="884.4" y="29" font-family="Liberation Sans, sans-serif" font-size="13" fill="#ececec">outlet...</text>
<path d="M942.0,17.0 l10,10 m0,-10 l-10,10" stroke="#a6a6a6" stroke-width="1.8" fill="none"/>
<rect x="976.3" y="13.0" width="20" height="20" fill="#000"/><g transform="translate(976.3,13.0)" fill="none" stroke="#b4b4b4" stroke-width="1.15" stroke-linecap="round"><path d="M0.8,6.6 Q2.5,4.4 5,5.4 L11.5,8.6 Q16,10.4 18.4,8.2"/><path d="M0.8,6.6 Q6,10.6 11,12.4 Q15.5,13.8 18.3,10.8 Q19.6,9.2 18.6,7.6"/><path d="M8.3,6 Q10.5,3.8 14,5 Q17,6.2 18.6,7.8"/><path d="M10.8,4.3 Q13,2.6 15.8,3.6 Q18,4.6 18.6,6.2"/><path d="M14.2,1.6 Q17,2.2 18.2,4.4" stroke-width="1.6"/></g><path d="M985.0,32.8 v-5.6 h4.2 M985.0,30.0 h3.2" fill="none" stroke="#d0d0d0" stroke-width="1.5"/>
<text x="1004.0" y="29" font-family="Liberation Sans, sans-serif" font-size="13" fill="#ececec">fan-inl...</text>
<path d="M1066.7,17.0 l10,10 m0,-10 l-10,10" stroke="#a6a6a6" stroke-width="1.8" fill="none"/>
<rect x="1101.0" y="13.0" width="20" height="20" fill="#000"/><g transform="translate(1101.0,13.0)" fill="none" stroke="#b4b4b4" stroke-width="1.15" stroke-linecap="round"><path d="M0.8,6.6 Q2.5,4.4 5,5.4 L11.5,8.6 Q16,10.4 18.4,8.2"/><path d="M0.8,6.6 Q6,10.6 11,12.4 Q15.5,13.8 18.3,10.8 Q19.6,9.2 18.6,7.6"/><path d="M8.3,6 Q10.5,3.8 14,5 Q17,6.2 18.6,7.8"/><path d="M10.8,4.3 Q13,2.6 15.8,3.6 Q18,4.6 18.6,6.2"/><path d="M14.2,1.6 Q17,2.2 18.2,4.4" stroke-width="1.6"/></g><path d="M1109.7,32.8 v-5.6 h4.2 M1109.7,30.0 h3.2" fill="none" stroke="#d0d0d0" stroke-width="1.5"/>
<text x="1128.7" y="29" font-family="Liberation Sans, sans-serif" font-size="13" fill="#ececec">fan-outl...</text>
<path d="M1199.3,17.0 l10,10 m0,-10 l-10,10" stroke="#a6a6a6" stroke-width="1.8" fill="none"/>
</svg>
<svg class="abs" style="left:0;top:0" width="44" height="526">
<g fill="#7c7c7c"><rect x="16" y="9" width="2" height="2"/><rect x="19" y="9" width="2" height="2"/><rect x="22" y="9" width="2" height="2"/><rect x="25" y="9" width="2" height="2"/><rect x="28" y="9" width="2" height="2"/><rect x="31" y="9" width="2" height="2"/><rect x="16" y="12" width="2" height="2"/><rect x="19" y="12" width="2" height="2"/><rect x="22" y="12" width="2" height="2"/><rect x="25" y="12" width="2" height="2"/><rect x="28" y="12" width="2" height="2"/><rect x="31" y="12" width="2" height="2"/></g>
<g fill="#7c7c7c"><rect x="16" y="97" width="2" height="2"/><rect x="19" y="97" width="2" height="2"/><rect x="22" y="97" width="2" height="2"/><rect x="25" y="97" width="2" height="2"/><rect x="28" y="97" width="2" height="2"/><rect x="31" y="97" width="2" height="2"/><rect x="16" y="100" width="2" height="2"/><rect x="19" y="100" width="2" height="2"/><rect x="22" y="100" width="2" height="2"/><rect x="25" y="100" width="2" height="2"/><rect x="28" y="100" width="2" height="2"/><rect x="31" y="100" width="2" height="2"/></g>
<g fill="#7c7c7c"><rect x="16" y="339" width="2" height="2"/><rect x="19" y="339" width="2" height="2"/><rect x="22" y="339" width="2" height="2"/><rect x="25" y="339" width="2" height="2"/><rect x="28" y="339" width="2" height="2"/><rect x="31" y="339" width="2" height="2"/><rect x="16" y="342" width="2" height="2"/><rect x="19" y="342" width="2" height="2"/><rect x="22" y="342" width="2" height="2"/><rect x="25" y="342" width="2" height="2"/><rect x="28" y="342" width="2" height="2"/><rect x="31" y="342" width="2" height="2"/></g>
<g fill="none" stroke="#eba64e"><circle cx="21.3" cy="35" r="10.8" stroke-width="1.4"/><circle cx="21.3" cy="35" r="9.4" stroke-width="0.5" stroke-dasharray="2 1.5"/><path d="M20.6,31.3 L26.4,32.5 M20.6,31.3 L16.1,36.4 M20.6,31.3 L23.0,37.0 M26.4,32.5 L23.0,37.0 M26.4,32.5 L28.2,38.8 M26.4,32.5 L24.0,27.4 M20.6,31.3 L24.0,27.4 M20.6,31.3 L17.9,27.4 M20.6,31.3 L14.6,31.3 M14.6,31.3 L17.9,27.4 M14.6,31.3 L16.1,36.4 M14.6,31.3 L11.5,34.9 M16.1,36.4 L11.5,34.9 M16.1,36.4 L13.4,40.7 M16.1,36.4 L18.2,41.9 M16.1,36.4 L23.0,37.0 M23.0,37.0 L18.2,41.9 M23.0,37.0 L24.0,42.2 M23.0,37.0 L28.2,38.8 M28.2,38.8 L24.0,42.2 M28.2,38.8 L30.6,34.9 M26.4,32.5 L30.6,34.9 M18.2,41.9 L17.9,27.4 M18.2,41.9 L13.4,40.7 M24.0,27.4 L17.9,27.4" stroke-width="0.85"/></g>
<path d="M13,69 L18,64 L29,64 L29,76 L24,81 L13,81 Z" fill="#eba64e"/>
<rect x="19" y="64.5" width="10" height="11" fill="#000"/>
<path d="M13,69 L18,64 L29,64 L29,76 L24,81 L13,81 Z M13,69 L18.5,69 L18.5,81 M18.5,69 L18.5,69 M18.5,81 L29,76" fill="none" stroke="#6cb84a" stroke-width="1.2"/>
<path d="M14,69.5 h12 M26,69.5 v7" stroke="#6cb84a" stroke-width="1" stroke-dasharray="1 2" fill="none"/>
<rect x="5.5" y="107.5" width="34" height="34" fill="none" stroke="#66b4f2" stroke-width="1.2"/>
<path d="M16,113.5 L27.5,125.5 L21.5,126 L25,134 L23,135 L19.5,127 L16,130.5 Z" fill="#eba64e" stroke="#6cb84a" stroke-width="0.6"/>
<path d="M29.5,159 A9,8 0 0 0 13,160" fill="none" stroke="#eba64e" stroke-width="1.8"/><path d="M11,158 L15,163 L17,158 Z" fill="#eba64e"/>
<path d="M13,166.5 A9,7 0 0 0 29,167" fill="none" stroke="#6cb84a" stroke-width="1.8"/><path d="M26,167 L31,168 L29.5,164 Z" fill="#6cb84a"/>
<g stroke="#eba64e" stroke-width="1.8"><path d="M20.7,193 V199.5 M20.7,202.5 V209 M12.5,201 H19 M22.5,201 H29"/></g>
<g fill="#6cb84a"><path d="M17.5,194 L20.7,190.5 L24,194 Z M17.5,208 L20.7,211.5 L24,208 Z M13.5,197.5 L10,201 L13.5,204.5 Z M28,197.5 L31.5,201 L28,204.5 Z"/></g>
<ellipse cx="20.7" cy="238" rx="6.8" ry="6" fill="none" stroke="#eba64e" stroke-width="1.6"/>
<path d="M7,239 H13 M29,239 H35 M32,236 V242 M26,243.5 L29.5,247" stroke="#6cb84a" stroke-width="1.6"/>
<circle cx="20" cy="275.5" r="7.3" fill="none" stroke="#eba64e" stroke-width="1.6"/><path d="M25.5,281 L28.5,284.5" stroke="#6cb84a" stroke-width="1.6"/>
<circle cx="21.3" cy="315" r="10.2" fill="none" stroke="#6cb84a" stroke-width="1.5"/><rect x="20.3" y="309.2" width="2.3" height="2" fill="#eba64e"/><rect x="20.3" y="313" width="2.3" height="8.3" fill="#eba64e"/>
<path d="M11,355 L24.5,358.5 L24.5,365.8 L11,375 Z" fill="#6cb84a"/>
<g stroke="#eba64e" stroke-width="1.3" fill="none"><path d="M11,355 L25,358.5 L25,366 L12,375.5 M11,354 V376 M15.5,356 V372 M20,357.5 V369 M11,365 L25,362.5 M11,375.5 H34 M17,371 H31 M21,368 H29 M24,366 H27"/></g>
<circle cx="20" cy="401.5" r="7.3" fill="none" stroke="#eba64e" stroke-width="1.6"/><path d="M25.5,407 L28.5,410.5" stroke="#6cb84a" stroke-width="1.6"/><rect x="16.5" y="398" width="7" height="7" fill="none" stroke="#6cb84a" stroke-width="1" stroke-dasharray="1.3 1.2"/>
<circle cx="20" cy="439.6" r="7.3" fill="none" stroke="#eba64e" stroke-width="1.6"/><path d="M25.5,445 L28.5,448.5" stroke="#6cb84a" stroke-width="1.6"/><path d="M16,439.6 H24.5 M19,436.8 L16,439.6 L19,442.4" stroke="#eba64e" stroke-width="1.6" fill="none"/>
<path d="M18.5,483.5 L21.3,485.5 L24,483.5 M18.5,487 L21.3,489 L24,487" stroke="#3e3e3e" stroke-width="1" fill="none"/>
<g fill="#7c7c7c"><rect x="4" y="499" width="2" height="2"/><rect x="7" y="499" width="2" height="2"/><rect x="4" y="502" width="2" height="2"/><rect x="7" y="502" width="2" height="2"/><rect x="4" y="505" width="2" height="2"/><rect x="7" y="505" width="2" height="2"/><rect x="4" y="508" width="2" height="2"/><rect x="7" y="508" width="2" height="2"/><rect x="4" y="511" width="2" height="2"/><rect x="7" y="511" width="2" height="2"/><rect x="4" y="514" width="2" height="2"/><rect x="7" y="514" width="2" height="2"/></g>
</svg>
<svg class="abs" style="left:1223px;top:0" width="38" height="493">
<g fill="#7c7c7c"><rect x="14" y="9" width="2" height="2"/><rect x="17" y="9" width="2" height="2"/><rect x="20" y="9" width="2" height="2"/><rect x="23" y="9" width="2" height="2"/><rect x="26" y="9" width="2" height="2"/><rect x="29" y="9" width="2" height="2"/><rect x="14" y="12" width="2" height="2"/><rect x="17" y="12" width="2" height="2"/><rect x="20" y="12" width="2" height="2"/><rect x="23" y="12" width="2" height="2"/><rect x="26" y="12" width="2" height="2"/><rect x="29" y="12" width="2" height="2"/></g>
<g fill="#7c7c7c"><rect x="14" y="135" width="2" height="2"/><rect x="17" y="135" width="2" height="2"/><rect x="20" y="135" width="2" height="2"/><rect x="23" y="135" width="2" height="2"/><rect x="26" y="135" width="2" height="2"/><rect x="29" y="135" width="2" height="2"/><rect x="14" y="138" width="2" height="2"/><rect x="17" y="138" width="2" height="2"/><rect x="20" y="138" width="2" height="2"/><rect x="23" y="138" width="2" height="2"/><rect x="26" y="138" width="2" height="2"/><rect x="29" y="138" width="2" height="2"/></g>
<g fill="#7c7c7c"><rect x="14" y="299" width="2" height="2"/><rect x="17" y="299" width="2" height="2"/><rect x="20" y="299" width="2" height="2"/><rect x="23" y="299" width="2" height="2"/><rect x="26" y="299" width="2" height="2"/><rect x="29" y="299" width="2" height="2"/><rect x="14" y="302" width="2" height="2"/><rect x="17" y="302" width="2" height="2"/><rect x="20" y="302" width="2" height="2"/><rect x="23" y="302" width="2" height="2"/><rect x="26" y="302" width="2" height="2"/><rect x="29" y="302" width="2" height="2"/></g>
<g fill="#7c7c7c"><rect x="14" y="433" width="2" height="2"/><rect x="17" y="433" width="2" height="2"/><rect x="20" y="433" width="2" height="2"/><rect x="23" y="433" width="2" height="2"/><rect x="26" y="433" width="2" height="2"/><rect x="29" y="433" width="2" height="2"/><rect x="14" y="436" width="2" height="2"/><rect x="17" y="436" width="2" height="2"/><rect x="20" y="436" width="2" height="2"/><rect x="23" y="436" width="2" height="2"/><rect x="26" y="436" width="2" height="2"/><rect x="29" y="436" width="2" height="2"/></g>
<ellipse cx="20.0" cy="28.3" rx="11" ry="5" fill="#eba64e" stroke="#bbb" stroke-width="0.5"/>
<rect x="7.0" y="35" width="26" height="1.3" fill="#a0a0a0"/>
<defs><linearGradient id="br" x1="0" y1="0" x2="0" y2="1"><stop offset="0" stop-color="#6e4a1e"/><stop offset="1" stop-color="#9a6a30"/></linearGradient></defs>
<ellipse cx="20.0" cy="42" rx="10.5" ry="5" fill="url(#br)"/>
<ellipse cx="25.0" cy="73" rx="5" ry="10.5" fill="#666" transform="rotate(45 25.0 73)"/>
<ellipse cx="14.7" cy="72.8" rx="6.5" ry="11.5" fill="#eba64e" stroke="#999" stroke-width="0.4"/>
<clipPath id="hc"><rect x="5.0" y="96" width="29.5" height="30"/></clipPath>
<path d="M-40.0,96 l30,30 M-40.0,126 l30,-30 M-34.0,96 l30,30 M-34.0,126 l30,-30 M-28.0,96 l30,30 M-28.0,126 l30,-30 M-22.0,96 l30,30 M-22.0,126 l30,-30 M-16.0,96 l30,30 M-16.0,126 l30,-30 M-10.0,96 l30,30 M-10.0,126 l30,-30 M-4.0,96 l30,30 M-4.0,126 l30,-30 M2.0,96 l30,30 M2.0,126 l30,-30 M8.0,96 l30,30 M8.0,126 l30,-30 M14.0,96 l30,30 M14.0,126 l30,-30 M20.0,96 l30,30 M20.0,126 l30,-30 M26.0,96 l30,30 M26.0,126 l30,-30 M32.0,96 l30,30 M32.0,126 l30,-30 M38.0,96 l30,30 M38.0,126 l30,-30 M44.0,96 l30,30 M44.0,126 l30,-30 " stroke="#8a8a8a" stroke-width="0.9" fill="none" clip-path="url(#hc)"/>
<ellipse cx="20.0" cy="111" rx="6.2" ry="11" fill="#eba64e" stroke="#777" stroke-width="0.6"/>
<path d="M9.0,162.3 Q20.0,151.3 31.0,162.3 Q20.0,173.3 9.0,162.3 Z" fill="none" stroke="#6cb84a" stroke-width="1.5"/><path d="M20.0,151.3 v3 M9.0,153.3 l2,3 M31.0,153.3 l-2,3" stroke="#6cb84a" stroke-width="1.5"/>
<circle cx="20.0" cy="162.3" r="3.2" fill="#eba64e"/>
<path d="M9.0,200.0 Q20.0,189.0 31.0,200.0 Q20.0,211.0 9.0,200.0 Z" fill="none" stroke="#6cb84a" stroke-width="1.5"/><path d="M20.0,189.0 v3 M9.0,191.0 l2,3 M31.0,191.0 l-2,3" stroke="#6cb84a" stroke-width="1.5"/>
<circle cx="20.0" cy="200" r="3" fill="none" stroke="#6cb84a" stroke-width="1.3"/>
<path d="M12.0,207.5 L28.0,192" stroke="#eba64e" stroke-width="1.6"/>
<rect x="8.5" y="227.5" width="17.5" height="17" fill="none" stroke="#6cb84a" stroke-width="1.3"/>
<rect x="12.6" y="231" width="18.5" height="16" fill="#eba64e"/>
<path d="M9.0,266 H31.0 V284 H20.0 M9.0,266 V272" stroke="#eba64e" stroke-width="1.5" stroke-dasharray="1.5 1.5" fill="none"/>
<path d="M21.0,284.5 Q20.0,274 9.0,275" stroke="#6cb84a" stroke-width="1.5" fill="none"/><path d="M6.5,275 L11.0,271.5 L11.0,278 Z" fill="#6cb84a"/>
<path d="M11.5,316 V332.5 H29.0 M11.5,332.5 L25.0,324" stroke="#6cb84a" stroke-width="1.5" fill="none"/>
<path d="M11.5,314 L8.5,319 L14.5,319 Z M32.0,332.5 L27.0,329.5 L27.0,335.5 Z M26.5,322 L21.5,322.5 L25.0,326.5 Z" fill="#eba64e"/>
<rect x="6.7" y="360.3" width="26.5" height="5.5" rx="2.75" fill="#000" stroke="#6cb84a" stroke-width="1"/>
<path d="M9.5,360.8 H21.0 V365.3 H9.5 A2.25,2.25 0 0 1 9.5,360.8 Z" fill="#eba64e"/>
<path d="M18.0,421 L20.5,423 L23.0,421 M18.0,424.5 L20.5,426.5 L23.0,424.5 M18.0,483.5 L20.5,485.5 L23.0,483.5 M18.0,487 L20.5,489 L23.0,487" stroke="#3e3e3e" stroke-width="1" fill="none"/>
<path d="M13.5,465 V451.5 H25.0" stroke="#6cb84a" stroke-width="1.6" fill="none"/>
<rect x="16.5" y="454.5" width="10.5" height="12.5" fill="none" stroke="#eba64e" stroke-width="1.3"/>
</svg>
<div class="abs" id="status"></div>
<div class="abs" id="sel">0 selected</div>
<div class="abs" id="dd"></div>
<div class="abs" id="ddtxt">all</div>
<svg class="abs" style="left:1240px;top:503px" width="18" height="12"><path d="M3.5,3.3 L15,3.3 L9.25,8.8 Z" fill="#e8e8f0"/></svg>
<div class="abs" id="contitle"></div>
<div class="abs" style="left:10px;top:531.5px;font-weight:bold;font-size:13px;color:#d2d2d2">Console</div>
<svg class="abs" style="left:1234px;top:530px" width="27" height="16"><rect x="3.5" y="2.5" width="10" height="10" rx="1.5" fill="none" stroke="#9a9a9a"/><rect x="5.5" y="4.5" width="5" height="5" fill="none" stroke="#9a9a9a"/><rect x="8" y="7" width="3" height="3" fill="none" stroke="#9a9a9a"/><path d="M24.6,3.3 L20.4,7.3 L24.6,11.3" fill="none" stroke="#b0b0b0" stroke-width="1.3"/></svg>
<div class="abs" id="conbox"></div>
<div class="abs" id="con"><div class="l">    62  2.1917e-01  1.2868e-03  1.4584e-03  1.2797e-03  1.9987e-16  4.3831e-02  4.2893e-02  0:14:48  438</div><div class="l">&nbsp;</div><div class="l"> Reversed flow on 56 faces (48.4% area) of pressure-inlet 38.</div><div class="l">Reverse flow in 7 faces in fan (cell zone ID: 374) inlet</div><div class="l w">WARNING:Extrapolating flow rate Values for fan (cell zone ID: 374)</div><div class="l">Reverse flow in 210 faces in fan (cell zone ID: 374) exit</div><div class="l">&nbsp;</div><div class="l"> Reversed flow on 3 faces (3.2% area) of pressure-outlet 39.</div><div class="l">    63  2.8005e-01  2.4858e-03  3.1489e-03  2.4315e-03  1.9841e-16  3.4876e-02  3.3041e-02  0:14:44  437</div><div class="l">&nbsp;</div><div class="l"> Reversed flow on 3 faces (3.6% area) of pressure-inlet 38.</div><div class="l">Reverse flow in 3 faces in fan (cell zone ID: 374) inlet</div><div class="l w">WARNING:Extrapolating flow rate Values for fan (cell zone ID: 374)</div><div class="l">Reverse flow in 92 faces in fan (cell zone ID: 374) exit</div><div class="l">    64  2.1486e-01  1.3113e-03  1.5138e-03  1.2714e-03  1.9821e-16  4.2959e-02  4.1025e-02  0:14:40  436</div><div class="l">&nbsp;</div><div class="l"> Reversed flow on 60 faces (49.1% area) of pressure-inlet 38.</div><div class="l">Reverse flow in 11 faces in fan (cell zone ID: 374) inlet</div><div class="l w">WARNING:Extrapolating flow rate Values for fan (cell zone ID: 374)</div><div class="l">Reverse flow in 265 faces in fan (cell zone ID: 374) exit</div><div class="l">&nbsp;</div><div class="l"> Reversed flow on 12 faces (11.5% area) of pressure-outlet 39.</div><div class="l">    65  2.6828e-01  2.3788e-03  3.1751e-03  2.2795e-03  1.9793e-16  3.4261e-02  3.2145e-02  0:14:36  435</div></div>
<div class="abs" id="scroll"></div>
<div class="abs" style="left:287px;top:636px;width:1px;height:14px;background:#f0f0f0"></div>
<div class="abs" style="left:217px;top:668px;width:3px;height:3px;border-radius:50%;background:#1aa0d8"></div>
<svg class="abs" style="left:1251px;top:554px" width="10" height="372">
<path d="M1,7 L5.2,2.4 L9.5,7 Z" fill="#111"/>
<rect x="0" y="322" width="10" height="12" fill="#454545"/>
<path d="M1,349 L5,355 L10,349 Z" fill="#111"/>
<rect x="2" y="358" width="2" height="11" fill="#5a8fc0"/>
<path d="M6,363 L8,366 L11,362" fill="none" stroke="#6ab4f0" stroke-width="2"/>
</svg>
<svg class="abs" style="left:1174px;top:553px" width="32" height="28">
<defs><linearGradient id="yb" x1="0" y1="0" x2="0" y2="1"><stop offset="0" stop-color="#eef070"/><stop offset="1" stop-color="#e2e41a"/></linearGradient></defs>
<rect x="0.5" y="0.5" width="30" height="26" rx="3.5" fill="url(#yb)" stroke="#3a3a52"/>
<path d="M14.4,5.6 L22.8,21 L6.5,21 Z" fill="none" stroke="#d8881c" stroke-width="1.05"/>
<rect x="14.2" y="10.5" width="1.8" height="5.5" fill="#6a6a40"/><rect x="14.2" y="17.3" width="1.8" height="1.3" fill="#6a6a40"/>
</svg>
<svg class="abs" style="left:1214px;top:553px" width="33" height="28">
<rect x="0.5" y="0.5" width="31" height="26" rx="4" fill="#222" stroke="#5e5e5e"/>
<circle cx="16" cy="12.5" r="8.3" fill="none" stroke="#161616" stroke-width="1.2"/>
<rect x="15.1" y="7.5" width="1.9" height="7" fill="#c08a1c"/><rect x="15.1" y="15.6" width="1.9" height="1.3" fill="#c08a1c"/>
</svg>
</body></html>
